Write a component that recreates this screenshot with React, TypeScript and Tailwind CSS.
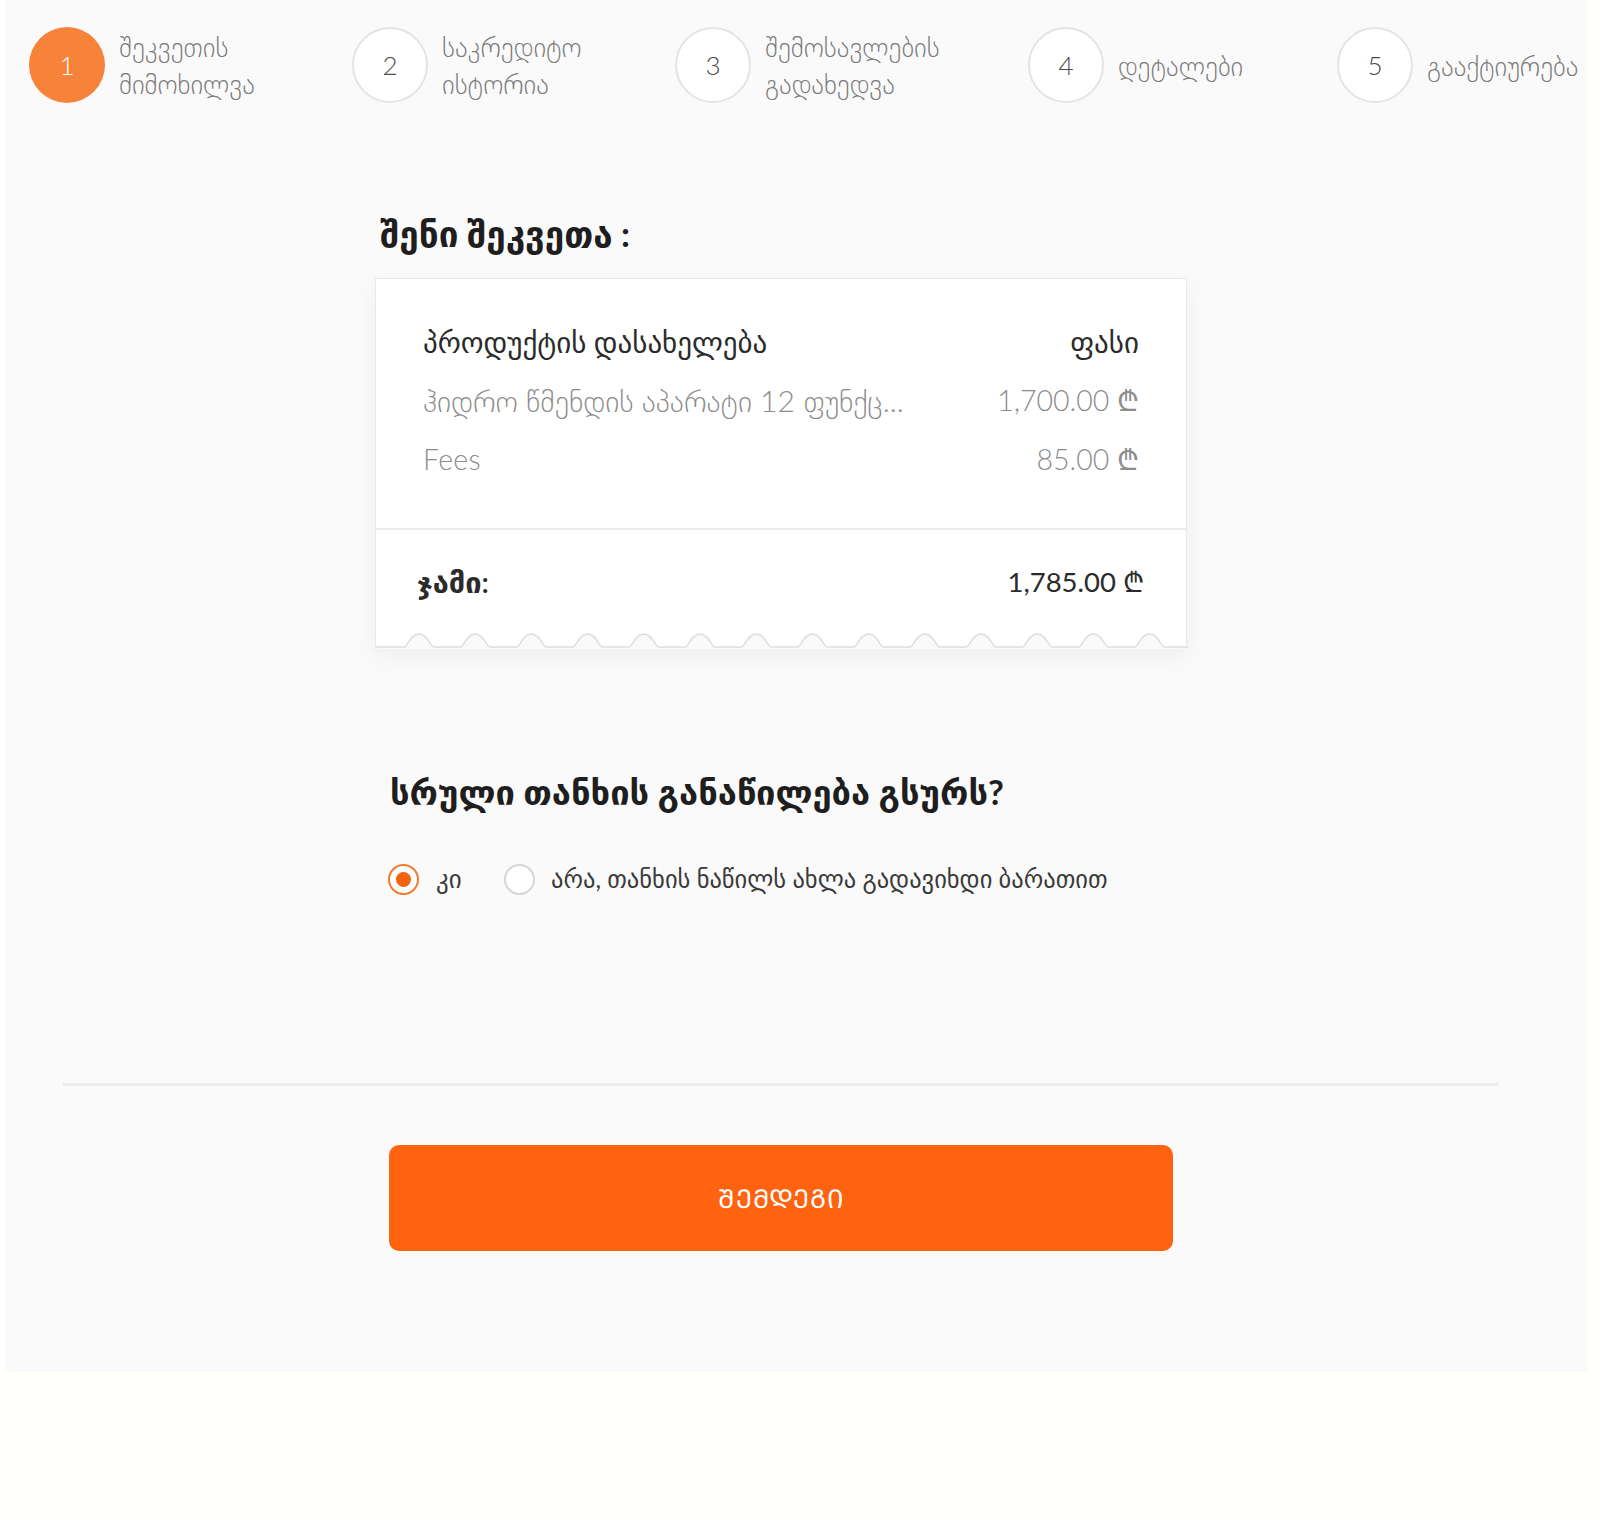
import React from 'react';

const font = '[font-family:Lato,"DejaVu_Sans",sans-serif]';

interface Step {
  num: number;
  lines: string[];
  width: string;
}

const steps: Step[] = [
  { num: 1, lines: ['შეკვეთის', 'მიმოხილვა'], width: 'w-[323px]' },
  { num: 2, lines: ['საკრედიტო', 'ისტორია'], width: 'w-[323px]' },
  { num: 3, lines: ['შემოსავლების', 'გადახედვა'], width: 'w-[353px]' },
  { num: 4, lines: ['დეტალები'], width: 'w-[309px]' },
  { num: 5, lines: ['გააქტიურება'], width: 'w-[250px]' },
];

function Stepper() {
  return (
    <div className="flex pl-[24px] pt-[27px]">
      {steps.map((s) => (
        <div key={s.num} className={`flex items-center gap-[14px] ${s.width}`}>
          {s.num === 1 ? (
            <div className="w-[76px] h-[76px] shrink-0 rounded-full bg-[#f7823a] flex items-center justify-center text-white text-[26px] font-light">
              {s.num}
            </div>
          ) : (
            <div className="w-[76px] h-[76px] shrink-0 rounded-full bg-white border-2 border-[#e4e4e4] flex items-center justify-center text-[#4a4a4a] text-[26px] font-light">
              {s.num}
            </div>
          )}
          <div className="flex flex-col text-[27px] leading-[37px] text-[#7b7b7b] font-extralight whitespace-nowrap">
            {s.lines.map((l) => (
              <span key={l}>{l}</span>
            ))}
          </div>
        </div>
      ))}
    </div>
  );
}

// receipt-style torn edge at the bottom of the card
function Scallop() {
  const w = 812;
  const h = 16;
  const base = 14;
  let d = `M0 ${base}`;
  for (let i = 0; i < 14; i++) {
    const x0 = 28 + i * 56.2;
    d += ` L${x0} ${base} C${x0 + 4} ${base} ${x0 + 6} 1 ${x0 + 15} 1 C${x0 + 24} 1 ${x0 + 26} ${base} ${x0 + 30} ${base}`;
  }
  d += ` L${w} ${base}`;
  const fill = `${d} L${w} ${h} L0 ${h} Z`;
  return (
    <svg width={w} height={h} viewBox={`0 0 ${w} ${h}`} className="block">
      <path d={fill} fill="#fafafa" />
      <path d={d} fill="none" stroke="#dedede" strokeWidth="1.5" />
    </svg>
  );
}

function OrderCard() {
  return (
    <div className="w-[812px] bg-white border-x border-t border-[#e9e9e9] shadow-[0_8px_24px_rgba(0,0,0,0.05)]">
      <div className="px-[47px] pt-[33px] pb-[39px]">
        <div className="h-[59px] flex items-center justify-between text-[29px] text-[#2b2b2b] font-medium">
          <span>პროდუქტის დასახელება</span>
          <span>ფასი</span>
        </div>
        <div className="h-[59px] flex items-center justify-between text-[#8d8d8d] font-light">
          <span className="whitespace-nowrap text-[30px]">ჰიდრო წმენდის აპარატი 12 ფუნქც...</span>
          <span className="text-[28.5px]">1,700.00 ₾</span>
        </div>
        <div className="h-[59px] flex items-center justify-between text-[28.5px] text-[#8d8d8d] font-light">
          <span className="tracking-[0.3px]">Fees</span>
          <span>85.00 ₾</span>
        </div>
      </div>
      <div className="h-[2px] bg-[#ececec]" />
      <div className="pl-[41px] pr-[42px] h-[103px] flex items-center justify-between text-[#2b2b2b]">
        <span className="text-[29px] font-semibold">ჯამი:</span>
        <span className="text-[27.5px] font-normal">1,785.00 ₾</span>
      </div>
      <Scallop />
    </div>
  );
}

export default function App() {
  return (
    <div className={`min-h-[1520px] bg-[#fffffc] ${font}`}>
      <div className="ml-[5px] w-[1583px] h-[1372px] bg-[#fafafa] flex flex-col">
        <Stepper />

        <div className="ml-[370px] w-[812px] flex flex-col">
          <h2 className="mt-[112px] ml-[5px] h-[36px] flex items-center text-[35px] font-bold text-[#1e1e1e]">
            შენი შეკვეთა :
          </h2>
          <div className="mt-[27px]">
            <OrderCard />
          </div>

          <h3 className="mt-[123px] ml-[15px] h-[40px] flex items-center text-[34.5px] font-bold text-[#1e1e1e]">
            სრული თანხის განაწილება გსურს?
          </h3>

          <div className="mt-[50px] ml-[13px] h-[34px] flex items-center text-[#3a3a3a]">
            <label className="flex items-center gap-[17px] w-[116px]">
              <span className="w-[31px] h-[31px] shrink-0 rounded-full border-2 border-[#f47b2e] bg-white flex items-center justify-center">
                <span className="w-[15px] h-[15px] rounded-full bg-[#f3620f]" />
              </span>
              <span className="text-[25px]">კი</span>
            </label>
            <label className="flex items-center gap-[16px]">
              <span className="w-[31px] h-[31px] shrink-0 rounded-full border-2 border-[#d6d6d6] bg-white" />
              <span className="text-[24.5px] whitespace-nowrap">არა, თანხის ნაწილს ახლა გადავიხდი ბარათით</span>
            </label>
          </div>
        </div>

        <div className="mt-[187px] ml-[58px] w-[1435px] h-[3px] bg-[#ebebeb]" />

        <button className="mt-[59px] ml-[384px] w-[784px] h-[106px] rounded-[10px] bg-[#ff6310] text-white text-[26px] tracking-[1px]">
          ᲨᲔᲛᲓᲔᲒᲘ
        </button>
      </div>
    </div>
  );
}
